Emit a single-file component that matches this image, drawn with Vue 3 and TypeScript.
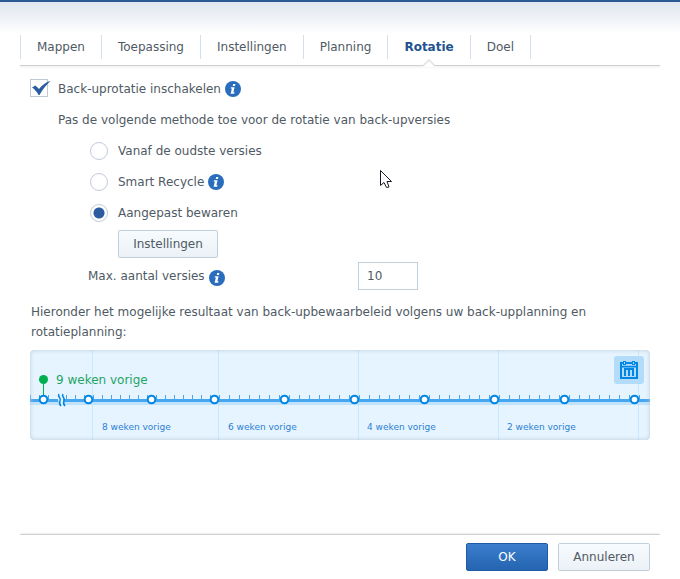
<script setup lang="ts">
import { ref } from 'vue'

const tabs = ['Mappen', 'Toepassing', 'Instellingen', 'Planning', 'Rotatie', 'Doel']
const activeTab = ref('Rotatie')
const enabled = ref(true)
const method = ref('custom')
const maxVersions = ref('10')

const weekLines = [62, 188, 328, 468, 608]
const points = [13, 58, 121, 184, 254, 324, 394, 464, 534, 604]
const labels = [
  { x: 72, text: '8 weken vorige' },
  { x: 198, text: '6 weken vorige' },
  { x: 337, text: '4 weken vorige' },
  { x: 477, text: '2 weken vorige' },
]
const ticks: number[] = []
for (let x = 0; x < 193; x += 9) if (x !== 27) ticks.push(x)
for (let x = 199; x < 615; x += 10) ticks.push(x)
</script>

<template>
  <main class="dialog">
    <nav class="tabs">
      <button
        v-for="tab in tabs"
        :key="tab"
        type="button"
        class="tab"
        :class="{ active: tab === activeTab }"
        @click="activeTab = tab"
      >
        {{ tab }}
        <svg v-if="tab === activeTab" class="notch" width="14" height="8" viewBox="0 0 14 8" aria-hidden="true">
          <path d="M0 8V7H1L7 1 13 7H14V8Z" fill="#fff" />
          <path d="M1 8 7 2 13 8" fill="none" stroke="#ececec" />
          <path d="M0 6.500H1L7 .500 13 6.500H14" fill="none" stroke="#d0d0d0" />
        </svg>
      </button>
    </nav>

    <form class="content" @submit.prevent>
      <div class="row">
        <label class="choice">
          <input v-model="enabled" type="checkbox" class="native" />
          <span class="box">
            <svg v-if="enabled" width="20" height="16" viewBox="0 0 20 16" aria-hidden="true">
              <path d="M1 7.500 4.500 5.500 8 9C11 5 15 2 19.500 1 15.500 4.500 11.500 9.500 8.500 15H7.500C6 12 4 9.500 1 7.500Z" fill="#2a5c9f" />
            </svg>
          </span>
          Back-uprotatie inschakelen
        </label>
        <svg class="info" width="16" height="16" viewBox="0 0 16 16" aria-hidden="true">
          <circle cx="8" cy="8" r="8" fill="#2a6dbd" />
          <path d="M8.200 3h2.200l-.5 2H7.700ZM6 6.200h3.600L8.400 11.200h1.200L9.100 12.800H5.600L6.900 7.600H5.600Z" fill="#fff" />
        </svg>
      </div>

      <p class="intro">Pas de volgende methode toe voor de rotatie van back-upversies</p>

      <div class="methods">
        <div class="row">
          <label class="choice">
            <input v-model="method" type="radio" name="method" value="oldest" class="native" />
            <span class="dot"></span>
            Vanaf de oudste versies
          </label>
        </div>
        <div class="row">
          <label class="choice">
            <input v-model="method" type="radio" name="method" value="smart" class="native" />
            <span class="dot"></span>
            Smart Recycle
          </label>
          <svg class="info" width="16" height="16" viewBox="0 0 16 16" aria-hidden="true">
            <circle cx="8" cy="8" r="8" fill="#2a6dbd" />
            <path d="M8.200 3h2.200l-.5 2H7.700ZM6 6.200h3.600L8.400 11.200h1.200L9.100 12.800H5.600L6.900 7.600H5.600Z" fill="#fff" />
          </svg>
        </div>
        <div class="row">
          <label class="choice">
            <input v-model="method" type="radio" name="method" value="custom" class="native" />
            <span class="dot"></span>
            Aangepast bewaren
          </label>
        </div>
      </div>
      <button type="button" class="btn settings">Instellingen</button>

      <div class="max-row">
        <div class="max-label">
          <label for="max">Max. aantal versies</label>
          <svg class="info" width="16" height="16" viewBox="0 0 16 16" aria-hidden="true">
            <circle cx="8" cy="8" r="8" fill="#2a6dbd" />
            <path d="M8.200 3h2.200l-.5 2H7.700ZM6 6.200h3.600L8.400 11.200h1.200L9.100 12.800H5.600L6.900 7.600H5.600Z" fill="#fff" />
          </svg>
        </div>
        <input id="max" v-model="maxVersions" type="text" class="number" />
      </div>

      <p class="result">
        Hieronder het mogelijke resultaat van back-upbewaarbeleid volgens uw back-upplanning en rotatieplanning:
      </p>

      <section class="timeline">
        <svg class="chart" width="100%" height="90">
          <rect v-for="x in weekLines" :key="x" :x="x" y="0" width="1" height="90" fill="#c8e8fc" />
          <rect x="0" y="52" width="100%" height="3" fill="#c2e2fb" />
          <rect x="0" y="49" width="100%" height="3" fill="#46a6f0" />
          <rect v-for="x in ticks" :key="x" :x="x" y="45" width="1" height="4" fill="#46a6f0" />
          <path d="M29 44H33V55H30L28 50Z" fill="#e6f4ff" />
          <path
            d="M29 44C27 47 32 48 30 51 29 53 29 54 31 56M33 44C31 47 36 48 34 51 33 53 33 54 35 56"
            fill="none"
            stroke="#0086e5"
            stroke-width="1.500"
          />
          <rect x="13" y="30" width="1" height="16" fill="#00b050" />
          <circle cx="13.500" cy="29.500" r="4.500" fill="#00b050" />
          <circle
            v-for="x in points"
            :key="x"
            :cx="x + 0.5"
            cy="49.500"
            r="3.800"
            fill="#fff"
            stroke="#0086e5"
            stroke-width="2"
          />
          <text class="latest" x="26" y="34">9 weken vorige</text>
          <text v-for="label in labels" :key="label.x" class="week" :x="label.x" y="80">{{ label.text }}</text>
        </svg>
        <button type="button" class="calendar" aria-label="Kalender">
          <svg width="18" height="18" viewBox="0 0 18 18" aria-hidden="true">
            <path d="M1 2H17V17H1ZM1 5.500H17" fill="none" stroke="#0086e5" stroke-width="2" />
            <path d="M2 3H16V4.500H2Z" fill="#b3dcfb" />
            <path d="M4 7H14V15H12V9H10V15H8V9H6V15H4Z" fill="#0086e5" />
            <rect x="3.500" y=".500" width="2" height="3" fill="#b3dcfb" stroke="#0086e5" />
            <rect x="12.500" y=".500" width="2" height="3" fill="#b3dcfb" stroke="#0086e5" />
          </svg>
        </button>
      </section>
    </form>

    <footer class="footer">
      <button type="button" class="btn primary">OK</button>
      <button type="button" class="btn">Annuleren</button>
    </footer>

    <svg class="pointer" width="13" height="20" viewBox="0 0 13 20" aria-hidden="true">
      <path d="M.500 1.500V16.500L4 13.500 6.500 18.500 9 18 7 12.500H11.500Z" fill="#fff" stroke="#1d1725" />
    </svg>
  </main>
</template>

<style>
body {
  margin: 0;
}
</style>

<style scoped>
.dialog {
  position: relative;
  box-sizing: border-box;
  display: flex;
  flex-direction: column;
  min-height: 100vh;
  padding: 33px 20px 8px;
  border-top: 2px solid #2a5a95;
  background: linear-gradient(#dfe6ef, #fff 32px) #fff;
  color: #505a64;
  font-family: Verdana, "DejaVu Sans", sans-serif;
  font-size: 12px;
  line-height: 20px;
}
button,
input {
  font: inherit;
  color: inherit;
}
p {
  margin: 0;
}
.tabs {
  display: flex;
  padding-bottom: 6px;
  border-bottom: 1px solid #d0d0d0;
}
.tab {
  position: relative;
  height: 24px;
  padding: 0 16px;
  border: 0;
  border-right: 1px solid #d3dfea;
  background: none;
}
.tab:first-child {
  border-left: 1px solid #d3dfea;
}
.tab.active {
  color: #22528f;
  font-weight: bold;
}
.notch {
  position: absolute;
  left: calc(50% - 7px);
  bottom: -8px;
}
.content {
  display: flex;
  flex-direction: column;
  padding: 13px 10px 0;
}
.tabs + .content {
  margin: 0 -20px;
  padding-left: 30px;
  padding-right: 30px;
  background: linear-gradient(#f1f1f1, #fff) 20px 0 / calc(100% - 40px) 3px no-repeat;
}
.row {
  display: flex;
  align-items: center;
  gap: 4px;
}
.choice {
  display: flex;
  align-items: center;
  gap: 10px;
  height: 20px;
}
.native {
  position: absolute;
  opacity: 0;
  margin: 0;
}
.box,
.dot {
  box-sizing: border-box;
  width: 18px;
  height: 18px;
  border: 1px solid #c1cbd8;
  background: #fff;
}
.box {
  align-self: flex-start;
}
.box svg {
  display: block;
}
.dot {
  border-radius: 50%;
}
.native:checked + .dot {
  background: radial-gradient(circle, #2a5c9f 5px, #fff 6px);
}
.info {
  display: block;
}
.intro {
  padding: 11px 0 11px 28px;
}
.methods {
  display: flex;
  flex-direction: column;
  gap: 11px;
  padding-left: 60px;
}
.btn {
  box-sizing: border-box;
  height: 28px;
  min-width: 92px;
  padding: 0 14px;
  border: 1px solid #c1cfdb;
  border-radius: 2px;
  background: linear-gradient(#f7fbfe, #ebf1f6);
}
.settings {
  align-self: flex-start;
  min-width: 100px;
  margin: 7px 0 4px 88px;
}
.max-row {
  display: grid;
  grid-template-columns: 270px 60px;
  align-items: center;
  padding: 0 0 12px 58px;
}
.max-label {
  display: flex;
  align-items: flex-end;
  gap: 4px;
}
.number {
  box-sizing: border-box;
  width: 60px;
  height: 28px;
  padding: 0 8px;
  border: 1px solid #c1cfdb;
}
.result {
  padding: 0 1px 8px;
}
.timeline {
  position: relative;
  overflow: hidden;
  border-radius: 4px;
  background: #e6f4ff;
}
.timeline::after {
  content: "";
  position: absolute;
  inset: 0;
  border-radius: 4px;
  box-shadow: inset 0 0 4px #b4c8d8;
  pointer-events: none;
}
.chart {
  display: block;
}
.latest {
  font-size: 12px;
  fill: #1fa463;
}
.week {
  font-size: 9px;
  fill: #2b7fd4;
}
.calendar {
  position: absolute;
  top: 6px;
  right: 6px;
  display: grid;
  place-items: center;
  width: 30px;
  height: 28px;
  padding: 0;
  border: 0;
  border-radius: 3px;
  background: #b3dcfb;
}
.footer {
  display: flex;
  justify-content: flex-end;
  gap: 10px;
  margin-top: auto;
  padding: 8px 10px 0;
  border-top: 1px solid #d0d0d0;
  box-shadow: 0 -2px 2px -1px #ececec;
}
.primary {
  min-width: 82px;
  border-color: #1f5ba3;
  background: linear-gradient(#3c7fce, #2464b0);
  color: #fff;
}
.pointer {
  position: absolute;
  left: 380px;
  top: 167px;
}
</style>
